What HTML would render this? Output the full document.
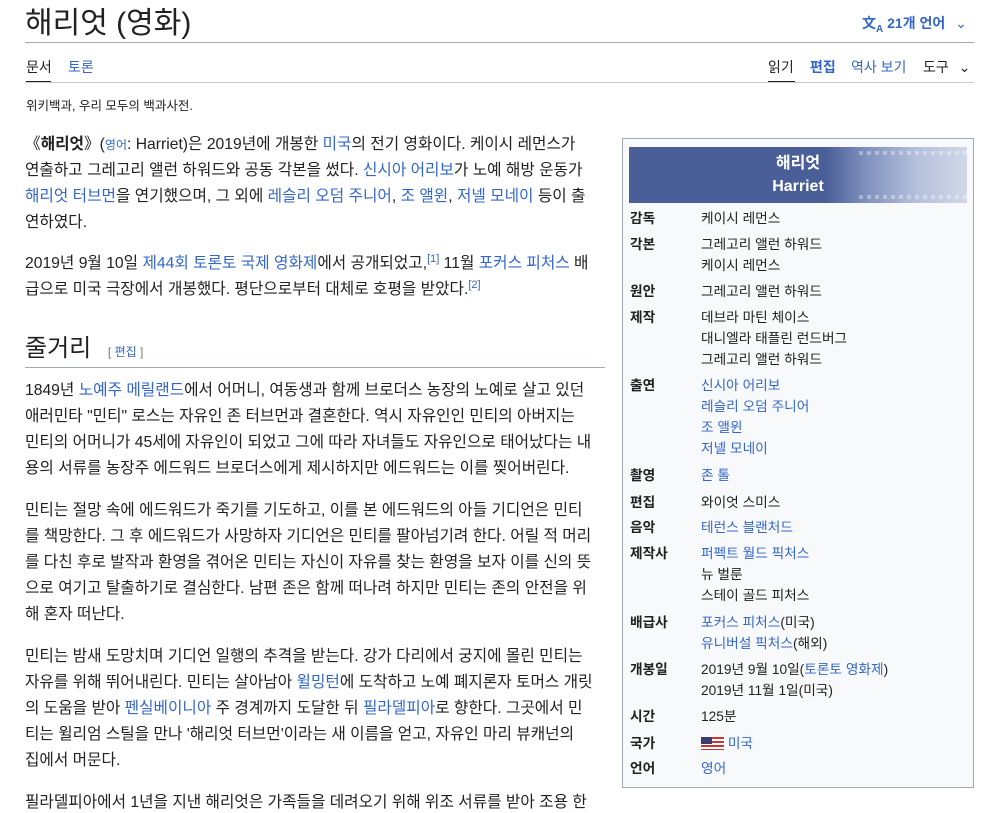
<!DOCTYPE html>
<html><head><meta charset="utf-8"><style>
body{margin:0;width:983px;height:800px;overflow:hidden;background:#fff;color:#202122;font-family:"Liberation Sans","Noto Sans CJK KR",sans-serif;}
a{color:#3366cc;text-decoration:none}
.abs{position:absolute}
.l{position:absolute;left:25px;font-size:15.7px;white-space:nowrap;line-height:20px}
sup{font-size:11px;vertical-align:6px;line-height:0}
.ib{position:absolute;left:622px;top:138px;width:350px;height:648px;border:1px solid #a2a9b1;background:#f8f9fa}
.r{position:absolute;font-size:13.7px;white-space:nowrap;line-height:21px}
.k{left:7px;font-weight:bold}
.v{left:78px}
</style></head><body>
<div class="abs" style="left:25px;top:4px;font-size:30px;line-height:40px">해리엇 (영화)</div>
<div class="abs" style="left:862px;top:13px;font-size:14px;font-weight:bold;color:#3366cc">文<sub style="font-size:10px">A</sub>&nbsp;21개 언어 <span style="font-weight:normal;margin-left:6px">⌄</span></div>
<div class="abs" style="left:25px;top:42px;width:949px;height:1px;background:#a2a9b1"></div>
<div class="abs" style="left:26px;top:57px;font-size:14px">문서</div>
<div class="abs" style="left:68px;top:57px;font-size:14px;color:#3366cc">토론</div>
<div class="abs" style="left:26px;top:81px;width:25px;height:2px;background:#202122"></div>
<div class="abs" style="left:768px;top:57px;font-size:14px">읽기</div>
<div class="abs" style="left:810px;top:57px;font-size:14px;font-weight:bold;color:#3366cc">편집</div>
<div class="abs" style="left:851px;top:57px;font-size:14px;color:#3366cc">역사 보기</div>
<div class="abs" style="left:923px;top:57px;font-size:14px">도구 <span style="margin-left:6px">⌄</span></div>
<div class="abs" style="left:768px;top:81px;width:27px;height:2px;background:#202122"></div>
<div class="abs" style="left:25px;top:82px;width:949px;height:1px;background:#c8ccd1"></div>
<div class="abs" style="left:26px;top:95px;font-size:12.5px">위키백과, 우리 모두의 백과사전.</div>

<div class="l" style="top:135px">《<b>해리엇</b>》(<a style="font-size:12px">영어</a>: Harriet)은 2019년에 개봉한 <a>미국</a>의 전기 영화이다. 케이시 레먼스가</div>
<div class="l" style="top:161px">연출하고 그레고리 앨런 하워드와 공동 각본을 썼다. <a>신시아 어리보</a>가 노예 해방 운동가</div>
<div class="l" style="top:187px"><a>해리엇 터브먼</a>을 연기했으며, 그 외에 <a>레슬리 오덤 주니어</a>, <a>조 앨윈</a>, <a>저넬 모네이</a> 등이 출</div>
<div class="l" style="top:213px">연하였다.</div>
<div class="l" style="top:254px">2019년 9월 10일 <a>제44회 토론토 국제 영화제</a>에서 공개되었고,<sup><a>[1]</a></sup> 11월 <a>포커스 피처스</a> 배</div>
<div class="l" style="top:280px">급으로 미국 극장에서 개봉했다. 평단으로부터 대체로 호평을 받았다.<sup><a>[2]</a></sup></div>
<div class="abs" style="left:25px;top:332px;font-size:24px;line-height:34px">줄거리 <span style="font-size:12px;color:#72777d;margin-left:10px">[ <a>편집</a> ]</span></div>
<div class="abs" style="left:25px;top:367px;width:580px;height:1px;background:#a2a9b1"></div>
<div class="l" style="top:381px">1849년 <a>노예주</a> <a>메릴랜드</a>에서 어머니, 여동생과 함께 브로더스 농장의 노예로 살고 있던</div>
<div class="l" style="top:407px">애러민타 "민티" 로스는 자유인 존 터브먼과 결혼한다. 역시 자유인인 민티의 아버지는</div>
<div class="l" style="top:433px">민티의 어머니가 45세에 자유인이 되었고 그에 따라 자녀들도 자유인으로 태어났다는 내</div>
<div class="l" style="top:459px">용의 서류를 농장주 에드워드 브로더스에게 제시하지만 에드워드는 이를 찢어버린다.</div>
<div class="l" style="top:501px">민티는 절망 속에 에드워드가 죽기를 기도하고, 이를 본 에드워드의 아들 기디언은 민티</div>
<div class="l" style="top:527px">를 책망한다. 그 후 에드워드가 사망하자 기디언은 민티를 팔아넘기려 한다. 어릴 적 머리</div>
<div class="l" style="top:553px">를 다친 후로 발작과 환영을 겪어온 민티는 자신이 자유를 찾는 환영을 보자 이를 신의 뜻</div>
<div class="l" style="top:579px">으로 여기고 탈출하기로 결심한다. 남편 존은 함께 떠나려 하지만 민티는 존의 안전을 위</div>
<div class="l" style="top:605px">해 혼자 떠난다.</div>
<div class="l" style="top:647px">민티는 밤새 도망치며 기디언 일행의 추격을 받는다. 강가 다리에서 궁지에 몰린 민티는</div>
<div class="l" style="top:673px">자유를 위해 뛰어내린다. 민티는 살아남아 <a>윌밍턴</a>에 도착하고 노예 폐지론자 토머스 개릿</div>
<div class="l" style="top:699px">의 도움을 받아 <a>펜실베이니아</a> 주 경계까지 도달한 뒤 <a>필라델피아</a>로 향한다. 그곳에서 민</div>
<div class="l" style="top:725px">티는 윌리엄 스틸을 만나 '해리엇 터브먼'이라는 새 이름을 얻고, 자유인 마리 뷰캐넌의</div>
<div class="l" style="top:751px">집에서 머문다.</div>
<div class="l" style="top:793px">필라델피아에서 1년을 지낸 해리엇은 가족들을 데려오기 위해 위조 서류를 받아 조용 한</div>

<div class="ib">
<div class="abs" style="left:6px;top:8px;width:338px;height:56px;background:linear-gradient(90deg,#4a5e98 58%,#7f90bd 70%,#b5c0db 85%,#d0d7e8 100%)"></div>
<div class="abs" style="left:236px;top:12px;width:108px;height:4px;background:repeating-linear-gradient(90deg,rgba(255,255,255,.35) 0 4px,transparent 4px 8px)"></div>
<div class="abs" style="left:236px;top:56px;width:108px;height:4px;background:repeating-linear-gradient(90deg,rgba(255,255,255,.35) 0 4px,transparent 4px 8px)"></div>
<div class="abs" style="left:6px;top:13px;width:338px;text-align:center;color:#fff;font-weight:bold;font-size:16px;line-height:23px">해리엇<br>Harriet</div>
<div class="r k" style="top:69px">감독</div><div class="r v" style="top:69px">케이시 레먼스</div>
<div class="r k" style="top:95px">각본</div><div class="r v" style="top:95px">그레고리 앨런 하워드<br>케이시 레먼스</div>
<div class="r k" style="top:142px">원안</div><div class="r v" style="top:142px">그레고리 앨런 하워드</div>
<div class="r k" style="top:168px">제작</div><div class="r v" style="top:168px">데브라 마틴 체이스<br>대니엘라 태플린 런드버그<br>그레고리 앨런 하워드</div>
<div class="r k" style="top:236px">출연</div><div class="r v" style="top:236px"><a>신시아 어리보</a><br><a>레슬리 오덤 주니어</a><br><a>조 앨윈</a><br><a>저넬 모네이</a></div>
<div class="r k" style="top:326px">촬영</div><div class="r v" style="top:326px"><a>존 톨</a></div>
<div class="r k" style="top:353px">편집</div><div class="r v" style="top:353px">와이엇 스미스</div>
<div class="r k" style="top:378px">음악</div><div class="r v" style="top:378px"><a>테런스 블랜처드</a></div>
<div class="r k" style="top:404px">제작사</div><div class="r v" style="top:404px"><a>퍼펙트 월드 픽처스</a><br>뉴 벌룬<br>스테이 골드 피처스</div>
<div class="r k" style="top:473px">배급사</div><div class="r v" style="top:473px"><a>포커스 피처스</a>(미국)<br><a>유니버설 픽처스</a>(해외)</div>
<div class="r k" style="top:520px">개봉일</div><div class="r v" style="top:520px">2019년 9월 10일(<a>토론토 영화제</a>)<br>2019년 11월 1일(미국)</div>
<div class="r k" style="top:567px">시간</div><div class="r v" style="top:567px">125분</div>
<div class="r k" style="top:594px">국가</div><div class="r v" style="top:594px"><span style="display:inline-block;width:23px;height:13px;vertical-align:-2px;background:repeating-linear-gradient(#c33 0 2px,#fff 2px 4px);position:relative"><span style="position:absolute;left:0;top:0;width:11px;height:7px;background:#3c3b6e"></span></span> <a>미국</a></div>
<div class="r k" style="top:619px">언어</div><div class="r v" style="top:619px"><a>영어</a></div>
</div>
</body></html>
